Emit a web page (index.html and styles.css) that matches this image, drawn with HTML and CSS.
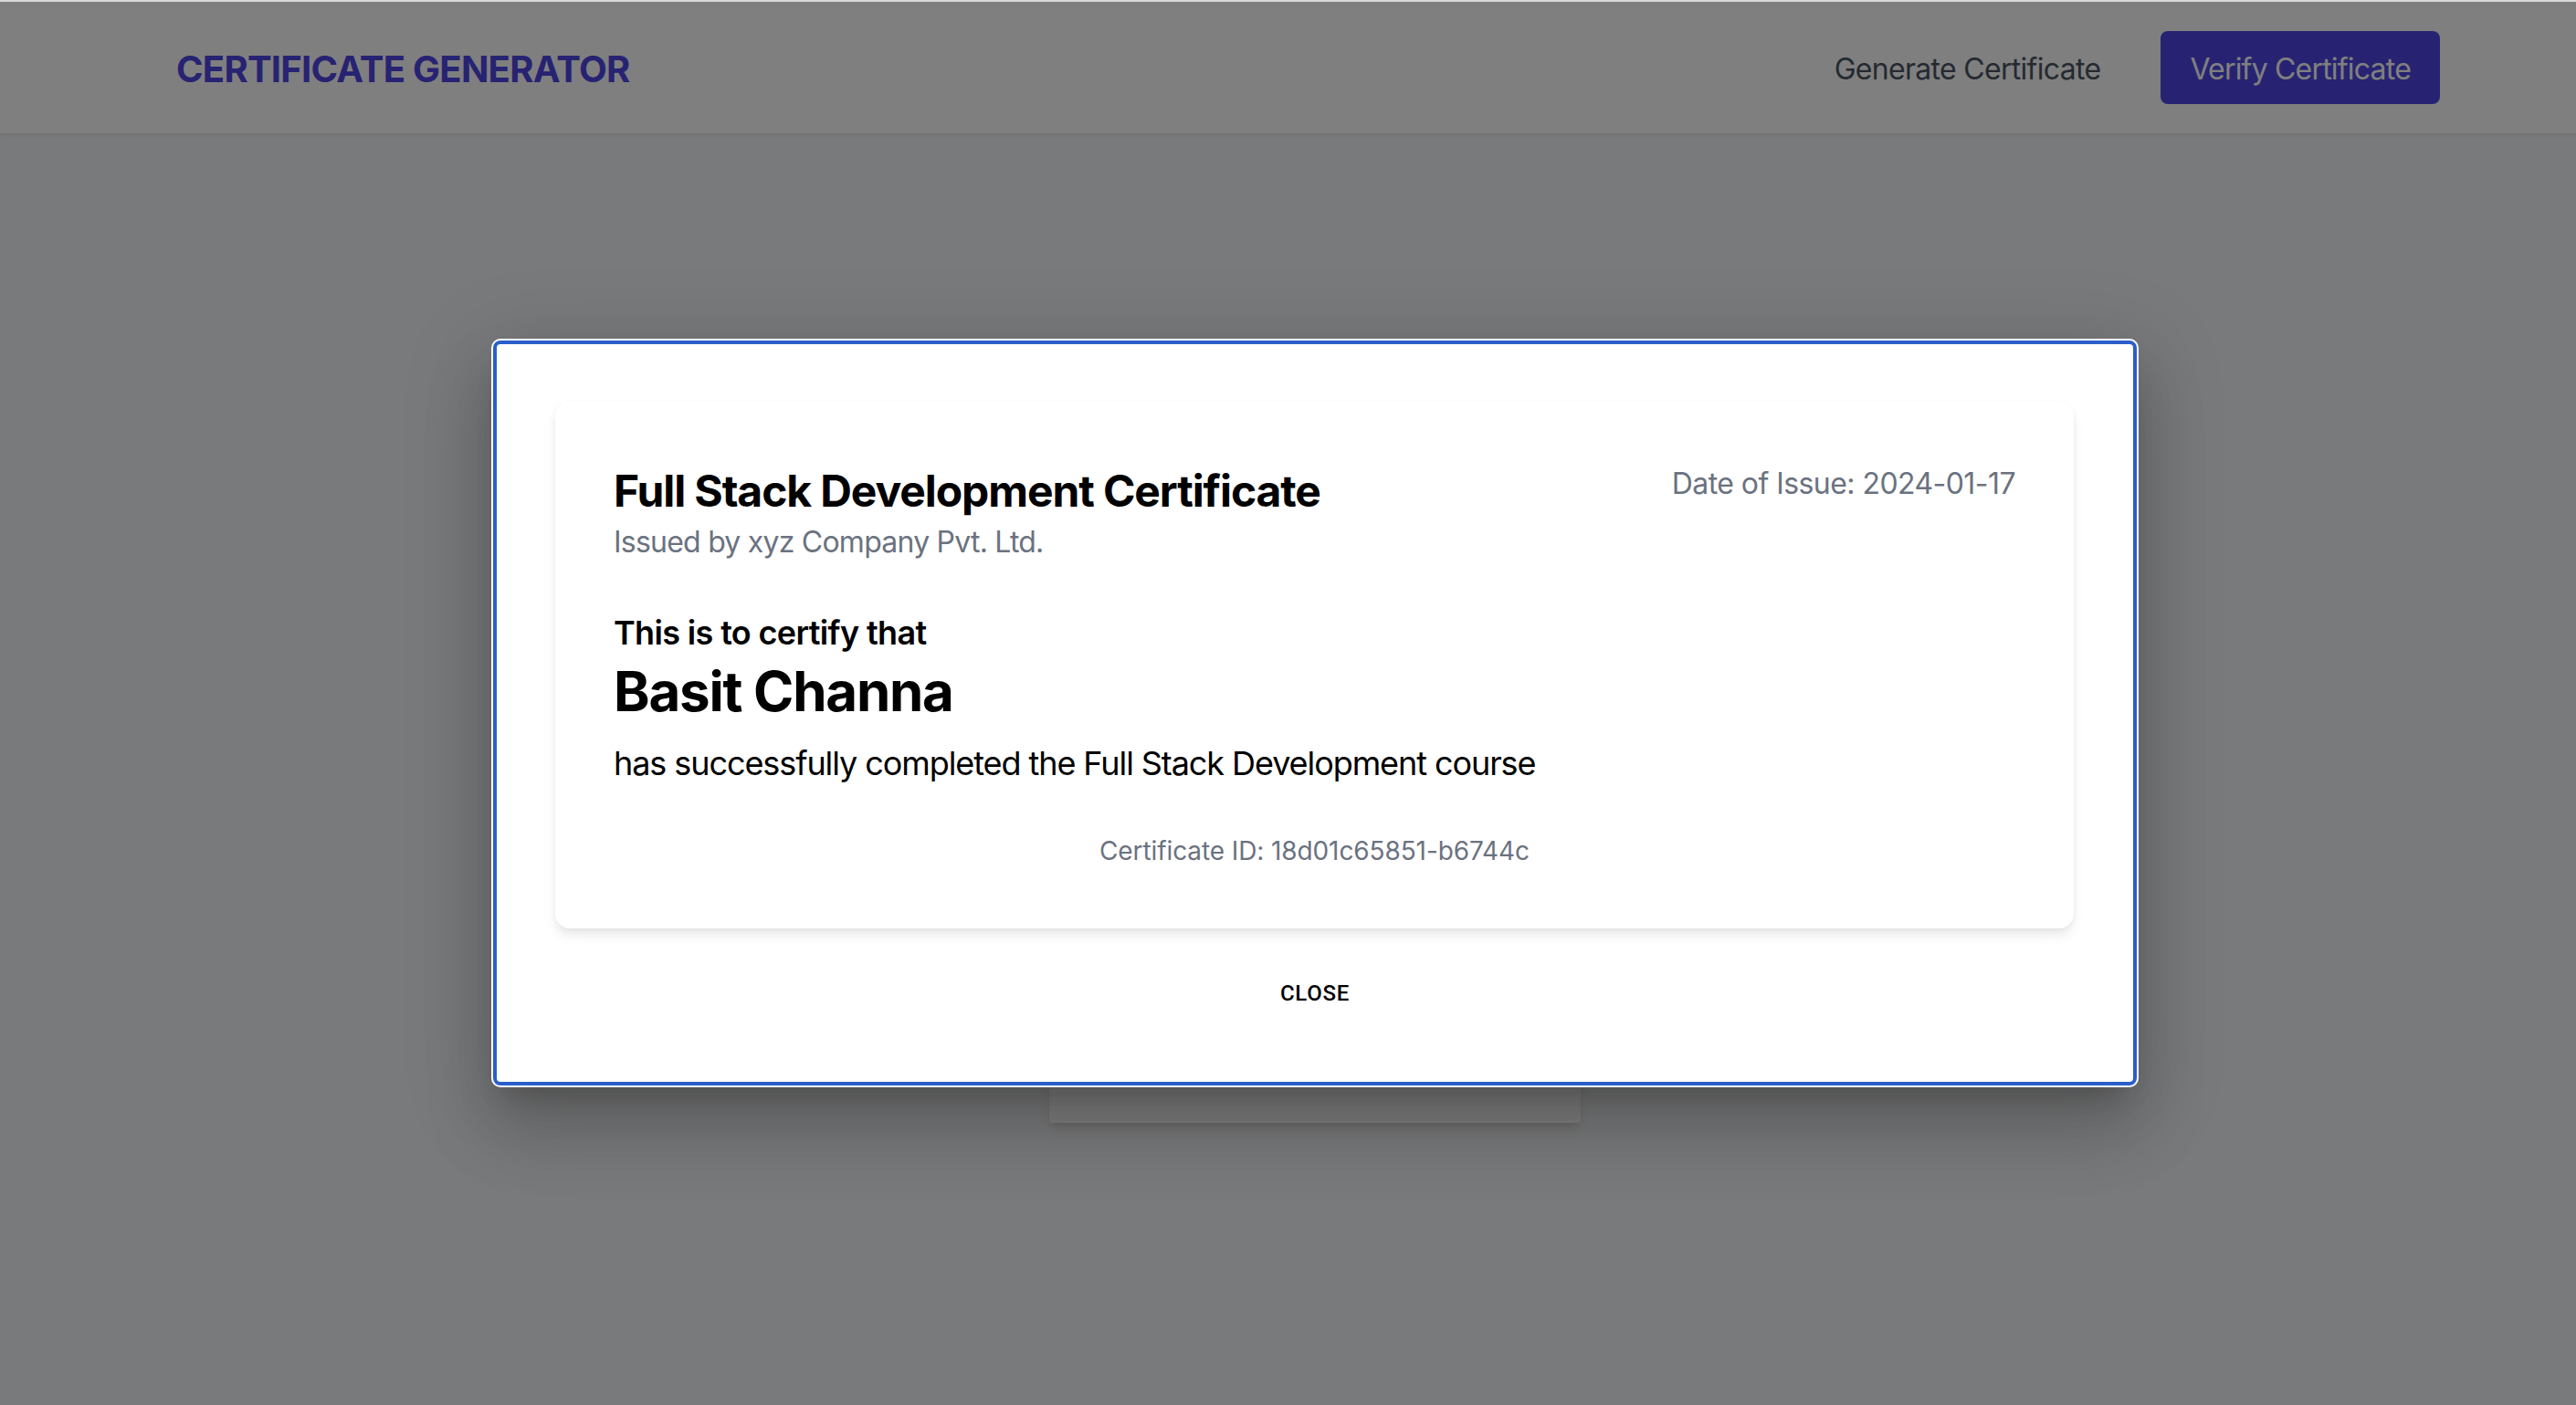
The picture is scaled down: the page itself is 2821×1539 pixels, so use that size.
FILE: index.html
```html
<!DOCTYPE html>
<html lang="en">
<head>
<meta charset="utf-8">
<title>Certificate Generator</title>
<link rel="stylesheet" href="styles.css">
</head>
<body>
<div class="topline"></div>
<div class="app">
  <header class="navbar">
    <div class="brand">CERTIFICATE GENERATOR</div>
    <nav class="nav">
      <a class="nav-link">Generate Certificate</a>
      <a class="nav-btn">Verify Certificate</a>
    </nav>
  </header>
  <main class="main">
    <div class="verify-card"></div>
  </main>
  <div class="overlay">
    <div class="dialog">
      <div class="dialog-content">
        <div class="cert-card">
          <div class="cert-head">
            <div class="cert-head-left">
              <h2 class="cert-title">Full Stack Development Certificate</h2>
              <p class="cert-issuer">Issued by xyz Company Pvt. Ltd.</p>
            </div>
            <p class="cert-date">Date of Issue: 2024-01-17</p>
          </div>
          <p class="cert-lead">This is to certify that</p>
          <h1 class="cert-name">Basit Channa</h1>
          <p class="cert-body">has successfully completed the Full Stack Development course</p>
          <p class="cert-id">Certificate ID: 18d01c65851-b6744c</p>
        </div>
      </div>
      <div class="dialog-actions">
        <button class="close-btn">CLOSE</button>
      </div>
    </div>
  </div>
</div>
</body>
</html>
```

FILE: styles.css
```css
html, body {
  margin: 0;
  padding: 0;
  background: #f3f4f6;
}
body {
  width: 2821px;
  height: 1539px;
  overflow: hidden;
  font-family: Inter, "Noto Sans", sans-serif;
}
.topline {
  height: 2px;
  background: #dadada;
}
.app {
  position: relative;
  width: 2880px;
  height: 1537px;
  background: #f3f4f6;
}
.navbar {
  height: 144px;
  box-sizing: border-box;
  background: #ffffff;
  display: flex;
  align-items: center;
  justify-content: space-between;
  padding: 0 208px 0 193px;
  box-shadow: 0 2px 4px rgba(0, 0, 0, 0.06);
}
.brand {
  font-weight: 700;
  font-size: 40px;
  line-height: 56px;
  letter-spacing: -0.75px;
  color: #4f46e5;
  padding-top: 3px;
}
.nav {
  display: flex;
  align-items: center;
}
.nav-link {
  font-size: 32px;
  line-height: 48px;
  letter-spacing: -0.7px;
  color: #4b5563;
  margin-right: 66px;
  padding-top: 3px;
}
.nav-btn {
  font-size: 32px;
  line-height: 48px;
  letter-spacing: -0.8px;
  color: #ffffff;
  background: #4f46e5;
  padding: 18px 32px 14px;
  border-radius: 8px;
}
.main {
  display: flex;
  justify-content: center;
}
.verify-card {
  width: 582px;
  height: 630px;
  margin-top: 454px;
  background: #ffffff;
  border-radius: 4px;
  box-shadow: 0 8px 12px -2px rgba(0, 0, 0, 0.1), 0 4px 8px -4px rgba(0, 0, 0, 0.1);
}
.overlay {
  position: absolute;
  inset: 0;
  background: rgba(0, 0, 0, 0.5);
  display: flex;
  justify-content: center;
  align-items: flex-start;
  padding-top: 371px;
  box-sizing: border-box;
}
.dialog {
  width: 1800px;
  box-sizing: border-box;
  border: 4px solid #2a5fca;
  border-radius: 8px;
  background: #ffffff;
  box-shadow: 0 0 0 2px #ffffff,
    0 22px 30px -14px rgba(0, 0, 0, 0.2),
    0 48px 76px 6px rgba(0, 0, 0, 0.14),
    0 18px 92px 16px rgba(0, 0, 0, 0.12);
}
.dialog-content {
  padding: 63px 65px 0 64px;
}
.cert-card {
  background: #ffffff;
  border-radius: 16px;
  padding: 66px 64px 65px;
  box-shadow: 0 8px 14px -2px rgba(0, 0, 0, 0.1), 0 2px 8px -2px rgba(0, 0, 0, 0.06);
}
.cert-head {
  display: flex;
  justify-content: space-between;
  align-items: flex-start;
}
.cert-title {
  margin: 0;
  font-weight: 700;
  font-size: 48px;
  line-height: 64px;
  letter-spacing: -1.1px;
  color: #000000;
}
.cert-issuer {
  margin: 0;
  font-size: 32px;
  line-height: 48px;
  letter-spacing: -0.77px;
  color: #6b7280;
}
.cert-date {
  margin: 0;
  font-size: 32px;
  line-height: 48px;
  letter-spacing: -0.56px;
  color: #6b7280;
}
.cert-lead {
  margin: 47px 0 0;
  font-weight: 600;
  font-size: 36px;
  line-height: 56px;
  letter-spacing: -0.65px;
  color: #000000;
}
.cert-name {
  margin: 0;
  font-weight: 700;
  font-size: 60px;
  line-height: 72px;
  letter-spacing: -1.25px;
  color: #000000;
}
.cert-body {
  margin: 15px 0 0;
  font-size: 36px;
  line-height: 56px;
  letter-spacing: -1.08px;
  color: #000000;
}
.cert-id {
  margin: 48px 0 0;
  text-align: center;
  font-size: 28px;
  line-height: 40px;
  letter-spacing: -0.1px;
  color: #6b7280;
}
.dialog-actions {
  height: 168px;
  box-sizing: border-box;
  display: flex;
  justify-content: center;
  align-items: flex-start;
  padding-top: 53px;
}
.close-btn {
  font-family: Roboto, "Liberation Sans", sans-serif;
  font-weight: 500;
  font-size: 24px;
  line-height: 36px;
  letter-spacing: 0.7px;
  color: #000000;
  background: none;
  border: 0;
  padding: 0 16px;
}
```
